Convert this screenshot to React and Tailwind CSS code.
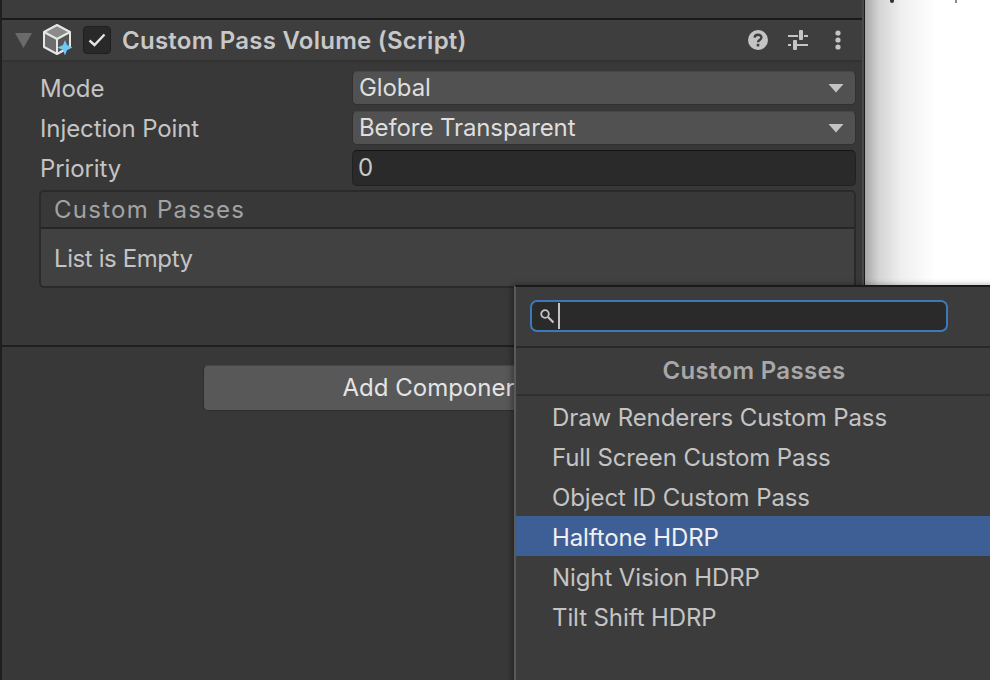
import React from 'react';

const ITEMS = [
  'Draw Renderers Custom Pass',
  'Full Screen Custom Pass',
  'Object ID Custom Pass',
  'Halftone HDRP',
  'Night Vision HDRP',
  'Tilt Shift HDRP',
];

function Caret() {
  return (
    <svg width="16" height="10" viewBox="0 0 16 10" className="shrink-0">
      <path d="M0.5 1 H15.5 L8 9.5 Z" fill="#c4c4c4" />
    </svg>
  );
}

function Dropdown({ value }) {
  return (
    <div className="h-[34px] rounded-[5px] bg-[#515151] border border-[#303030] border-t-[#464646] flex items-center justify-between pl-[6px] pr-[9px] text-[#dedede] tracking-[-0.1px]">
      <span>{value}</span>
      <div className="flex pr-[2px]"><Caret /></div>
    </div>
  );
}

function Row({ label, children }) {
  return (
    <div className="flex items-center h-[40px]">
      <div className="w-[312px] shrink-0 pt-[2px] text-[#c4c4c4] tracking-[-0.1px]">{label}</div>
      <div className="flex-1">{children}</div>
    </div>
  );
}

function CubeIcon() {
  return (
    <svg width="30" height="32" viewBox="0 0 30 32">
      <path d="M14 15 L27 8 L14 1 L1 8 Z" fill="#8a8a8a" />
      <path d="M14 15 L1 8 V23 L14 30 Z" fill="#6c6c6c" />
      <path d="M14 15 L27 8 V23 L14 30 Z" fill="#555555" />
      <path d="M14 1 L27 8 V23 L14 30 L1 23 V8 Z M1 8 L14 15 L27 8 M14 15 V30" fill="none" stroke="#e6e6e6" strokeWidth="2" strokeLinejoin="round" />
      <path d="M22 16 L24 21 L29.5 23.5 L24 26 L22 31.5 L20 26 L14.5 23.5 L20 21 Z" fill="#6cc8f5" />
    </svg>
  );
}

function HeaderIcons() {
  return (
    <div className="flex items-center shrink-0 pr-[21px]">
      <svg width="20" height="20" viewBox="0 0 20 20">
        <circle cx="10" cy="10" r="10" fill="#c4c4c4" />
        <path d="M6.6 7.6 C6.8 3.8 13.4 3.8 13.4 7.6 C13.4 10 10 10 10 12.2" fill="none" stroke="#3e3e3e" strokeWidth="2.4" />
        <rect x="8.7" y="13.8" width="2.6" height="2.6" fill="#3e3e3e" />
      </svg>
      <svg width="20" height="20" viewBox="0 0 20 20" fill="#c4c4c4" className="ml-[20px]">
        <rect x="0" y="5" width="10" height="2" />
        <rect x="16" y="5" width="4" height="2" />
        <rect x="11" y="0" width="4" height="10" rx="1" />
        <rect x="0" y="14" width="3" height="2" />
        <rect x="9" y="14" width="11" height="2" />
        <rect x="5" y="10" width="4" height="10" rx="1" />
      </svg>
      <svg width="6" height="20" viewBox="0 0 6 20" fill="#c4c4c4" className="ml-[27px]">
        <circle cx="3" cy="3" r="2.6" />
        <circle cx="3" cy="10" r="2.6" />
        <circle cx="3" cy="17" r="2.6" />
      </svg>
    </div>
  );
}

export default function App() {
  return (
    <div className="relative w-[990px] h-[680px] overflow-hidden flex bg-[#383838] text-[24px] leading-[30px] font-['Inter',sans-serif]">
      {/* inspector */}
      <div className="w-[862px] shrink-0 flex flex-col border-l-2 border-[#1f1f1f]">
        <div className="h-[18px] bg-[#3c3c3c] shrink-0" />
        <div className="h-[2px] bg-[#1a1a1a] shrink-0" />

        {/* component header */}
        <div className="h-[42px] shrink-0 bg-[#3e3e3e] border-b-2 border-[#323232] flex items-center">
          <svg width="17" height="15" viewBox="0 0 17 15" className="ml-[13px] shrink-0">
            <path d="M0 0 H17 L8.5 15 Z" fill="#6a6a6a" />
          </svg>
          <div className="ml-[11px] shrink-0 flex"><CubeIcon /></div>
          <div className="ml-[10px] w-[28px] h-[28px] shrink-0 rounded-[4px] bg-[#292929] border border-[#1f1f1f] flex items-center justify-center">
            <svg width="18" height="14" viewBox="0 0 18 14">
              <path d="M1.5 7.5 L6.5 12 L16.5 1.5" fill="none" stroke="#e4e4e4" strokeWidth="2.4" />
            </svg>
          </div>
          <div className="ml-[11px] pt-[2px] flex-1 font-semibold text-[#c8c8c8] tracking-[0.25px]">Custom Pass Volume (Script)</div>
          <HeaderIcons />
        </div>

        {/* properties */}
        <div className="h-[285px] shrink-0 bg-[#383838] border-b-2 border-[#1f1f1f] pl-[38px] pr-[6px] pt-[6px]">
          <Row label="Mode"><Dropdown value="Global" /></Row>
          <Row label="Injection Point"><Dropdown value="Before Transparent" /></Row>
          <Row label="Priority">
            <div className="h-[36px] rounded-[5px] bg-[#2a2a2a] border border-[#212121] border-t-[#141414] flex items-center pl-[5px] text-[#c8c8c8]">0</div>
          </Row>
          <div className="mt-[2px] -ml-[1px] h-[98px] rounded-[5px] border-2 border-[#2a2a2a] overflow-hidden">
            <div className="h-[37px] bg-[#383838] border-b-2 border-[#262626] flex items-center pl-[13px] text-[#a3a3a3] tracking-[1.25px]">Custom Passes</div>
            <div className="h-[57px] bg-[#414141] flex items-center pl-[13px] pt-[3px] text-[#c4c4c4] tracking-[-0.4px]">List is Empty</div>
          </div>
        </div>

        {/* add component */}
        <div className="flex-1 pt-[18px] pl-[201px]">
          <div className="w-[464px] h-[46px] rounded-[5px] bg-[#585858] border border-[#2e2e2e] border-t-[#464646] flex items-center justify-center text-[#e4e4e4]">Add Component</div>
        </div>
      </div>

      {/* splitter and page behind */}
      <div className="w-[2px] shrink-0 bg-[#4a4a4a]" />
      <div className="relative flex-1 border-l border-[#1a1a1a] bg-[linear-gradient(90deg,#a8a8a8_0px,#d4d4d4_14px,#efefef_36px,#ffffff_70px)]">
        {/* cut-off text of the page behind */}
        <div className="absolute left-[25px] top-0 w-[4px] h-[3px] bg-[#333333] rounded-b-[2px]" />
        <div className="absolute left-[90px] top-0 w-[2px] h-[3px] bg-[#8a8a8a]" />
      </div>

      {/* add component popup */}
      <div className="absolute left-[514px] top-[285px] w-[490px] h-[410px] bg-[#3c3c3c] border-t-2 border-l-2 border-t-[#1a1a1a] border-l-[#5a5a5a] shadow-[-2px_0_6px_rgba(0,0,0,0.35)] flex flex-col">
        <div className="h-[61px] shrink-0 border-b-2 border-[#282828] pl-[14px] pt-[13px]">
          <div className="w-[418px] h-[32px] rounded-[7px] bg-[#2a2a2a] border-2 border-[#3a79bb] flex items-center pl-[7px]">
            <svg width="16" height="16" viewBox="0 0 16 16" className="shrink-0">
              <circle cx="6" cy="6" r="3.8" fill="none" stroke="#c4c4c4" strokeWidth="1.8" />
              <path d="M9 9 L14.5 14.5" stroke="#c4c4c4" strokeWidth="2.2" />
            </svg>
            <div className="ml-[3px] w-[2px] h-[26px] bg-[#c4c4c4]" />
          </div>
        </div>
        <div className="h-[48px] shrink-0 border-b-2 border-[#303030] flex items-center justify-center font-semibold text-[#a8a8a8] tracking-[0.3px] pr-[12px]">Custom Passes</div>
        <div>
          {ITEMS.map((item) => (
            <div
              key={item}
              className={
                'h-[40px] flex items-center pl-[36px] pt-[4px] tracking-[-0.1px] ' +
                (item === 'Halftone HDRP' ? 'bg-[#3e5f96] text-[#f0f0f0]' : 'text-[#c4c4c4]')
              }
            >
              {item}
            </div>
          ))}
        </div>
      </div>
    </div>
  );
}
